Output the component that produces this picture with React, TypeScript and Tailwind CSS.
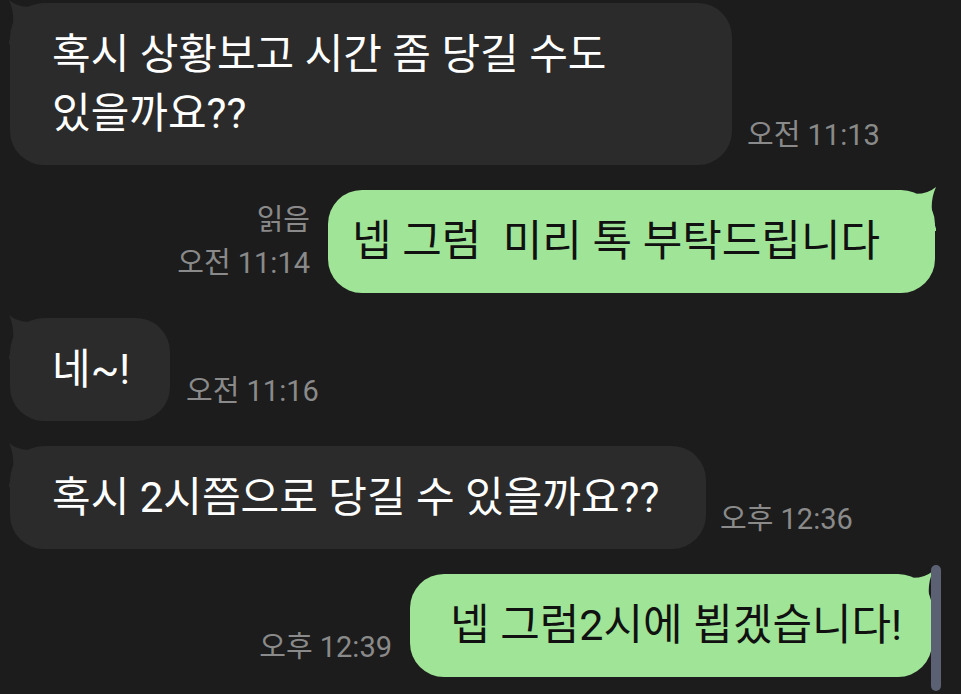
import React from "react";

const font = { fontFamily: '"Roboto", "Noto Sans CJK KR", "Noto Sans", sans-serif' };

// horn-shaped tail drawn over the bubble's top corner
function Tail({ side, color }: { side: "left" | "right"; color: string }) {
  return (
    <svg
      viewBox="0 0 40 44"
      className={
        side === "right"
          ? "absolute -top-[3px] -right-[1px] w-[40px] h-[44px]"
          : "absolute -top-[3px] -left-[1px] w-[40px] h-[44px] -scale-x-100"
      }
    >
      <path d="M0 3 Q26 12 40 0 Q31 20 41 44 L0 44 Z" fill={color} />
    </svg>
  );
}

function Time({ text, read }: { text: string; read?: boolean }) {
  return (
    <div className="flex flex-col items-end text-[29px] leading-[43px] text-[#8a8a8a] mb-[8px] whitespace-nowrap">
      {read && <span>읽음</span>}
      <span>{text}</span>
    </div>
  );
}

function Incoming({ text, time, width, gap }: { text: string; time: string; width: string; gap: string }) {
  return (
    <div className={`flex items-end pl-[10px] ${gap}`}>
      <div
        className={`relative bg-[#2b2b2b] text-white rounded-[34px] pl-[42px] py-[22px] text-[42px] leading-[59px] break-keep ${width}`}
      >
        <Tail side="left" color="#2b2b2b" />
        <span className="relative">{text}</span>
      </div>
      <Time text={time} />
    </div>
  );
}

function Outgoing({
  text,
  time,
  read,
  width,
  pad,
  mr,
}: {
  text: string;
  time: string;
  read?: boolean;
  width: string;
  pad: string;
  mr: string;
}) {
  return (
    <div className={`flex items-end justify-end gap-[18px] ${mr}`}>
      <Time text={time} read={read} />
      <div
        className={`relative bg-[#a0e597] text-[#111] rounded-[34px] py-[22px] text-[43px] leading-[59px] whitespace-pre ${width} ${pad}`}
      >
        <Tail side="right" color="#a0e597" />
        <span className="relative">{text}</span>
      </div>
    </div>
  );
}

export default function App() {
  return (
    <div className="relative w-[961px] h-[694px] overflow-hidden bg-[#1c1c1c]" style={font}>
      <div className="flex flex-col pt-[3px] gap-[25px]">
        <Incoming
          text="혹시 상황보고 시간 좀 당길 수도 있을까요??"
          time="오전 11:13"
          width="w-[722px] pr-[42px]"
          gap="gap-[15px]"
        />
        <Outgoing
          text="넵 그럼  미리 톡 부탁드립니다"
          time="오전 11:14"
          read
          width="w-[607px]"
          pad="pl-[24px]"
          mr="mr-[26px]"
        />
        <Incoming text="네~!" time="오전 11:16" width="w-[160px]" gap="gap-[16px]" />
        <Incoming
          text="혹시 2시쯤으로 당길 수 있을까요??"
          time="오후 12:36"
          width="w-[696px]"
          gap="gap-[14px]"
        />
        <Outgoing
          text="넵 그럼2시에 뵙겠습니다!"
          time="오후 12:39"
          width="w-[522px]"
          pad="pl-[40px]"
          mr="mr-[29px]"
        />
      </div>
      {/* scrollbar thumb */}
      <div className="absolute left-[931px] top-[565px] w-[10px] h-[126px] rounded-full bg-[#5c6073]" />
    </div>
  );
}
